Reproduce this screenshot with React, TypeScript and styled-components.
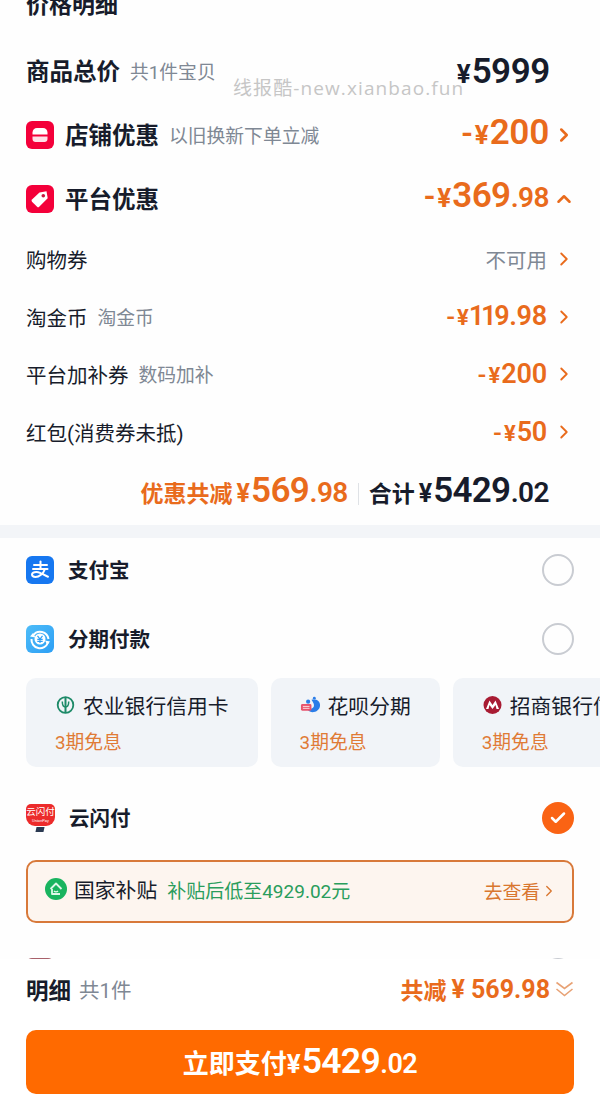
import styled, { createGlobalStyle } from "styled-components";
import { ChevronRight, ChevronUp, Check } from "lucide-react";

const ORANGE = "#e96b1c";
const INK = "#171c2b";
const GRAY = "#7f8894";
const SANS = `Roboto, "Noto Sans CJK SC", sans-serif`;

const GlobalStyle = createGlobalStyle`
  html, body {
    margin: 0;
    padding: 0;
    background: #fefefe;
  }
  * {
    box-sizing: border-box;
  }
`;

interface MoneyProps {
  prefix?: string;
  whole: string;
  cents?: string;
  big: number;
  small?: number;
  unit?: number;
  lift?: number;
}

function Money({ prefix, whole, cents, big, small, unit, lift }: MoneyProps) {
  return (
    <MoneyText $lift={lift || 0}>
      {prefix && <Minus $size={big * 0.9}>{prefix}</Minus>}
      <Sign $size={unit || 22}>¥</Sign>
      <Whole $size={big}>{whole}</Whole>
      {cents && <Cents $size={small || 28}>{cents}</Cents>}
    </MoneyText>
  );
}

function ShopIcon() {
  return (
    <BadgeSvg viewBox="0 0 28 28">
      <rect width="28" height="28" rx="6" fill="#f4003a" />
      <path d="M6.500 13.500v-2C6.500 9 8.500 7 11 7h6c2.500 0 4.500 2 4.500 4.500v2z" fill="#fff" />
      <path d="M6.500 15.500h15v2.500c0 1.700-1.300 3-3 3h-9c-1.700 0-3-1.300-3-3z" fill="#fff" opacity=".88" />
    </BadgeSvg>
  );
}

function TagIcon() {
  return (
    <BadgeSvg viewBox="0 0 28 28">
      <rect width="28" height="28" rx="6" fill="#f4003a" />
      <path d="M13.500 7.500l7-1.200 1.200 7-8.500 8.500a1.500 1.500 0 0 1-2.100 0l-5.100-5.100a1.500 1.500 0 0 1 0-2.100z" fill="#fff" />
      <circle cx="17.300" cy="10.700" r="1.800" fill="#c9153f" />
    </BadgeSvg>
  );
}

function AlipayIcon() {
  return (
    <BadgeSvg viewBox="0 0 28 28">
      <rect width="28" height="28" rx="6" fill="#1677f0" />
      <g fill="none" stroke="#fff" strokeWidth="2" strokeLinecap="round">
        <path d="M8 9h13" />
        <path d="M14.500 5.500V13" />
        <path d="M7 13h14.500" />
        <path d="M19 13c-1.500 4.500-6 8-9.500 8-2.200 0-3.500-1-3.500-2.400 0-2.200 4-3.600 8-1.800 2.500 1.100 5 2.700 8 3.900" />
      </g>
    </BadgeSvg>
  );
}

function InstallmentIcon() {
  return (
    <BadgeSvg viewBox="0 0 28 28">
      <defs>
        <linearGradient id="inst" x1="0" y1="0" x2="1" y2="1">
          <stop offset="0" stopColor="#4dbcf8" />
          <stop offset="1" stopColor="#2d9ff5" />
        </linearGradient>
      </defs>
      <rect width="28" height="28" rx="6" fill="url(#inst)" />
      <g fill="none" stroke="#fff" strokeWidth="2">
        <path d="M7 10.500A8.500 8.500 0 0 1 22.500 14" />
        <path d="M22 17.500A8.500 8.500 0 0 1 5.500 14" />
      </g>
      <path d="M4 11.500l5.500 1-2.500-4.500zM24 16.500l-5 -1 2.300 4.500z" fill="#fff" />
      <circle cx="14" cy="14" r="5.500" fill="#fff" />
      <path d="M11.500 10.800l2.500 3.200 2.500-3.200M11.300 14.300h5.400M11.300 16.300h5.400M14 14v4" fill="none" stroke="#2d9ff5" strokeWidth="1.200" />
    </BadgeSvg>
  );
}

function AbcIcon() {
  return (
    <BankSvg viewBox="0 0 20 20">
      <circle cx="10" cy="10" r="7.800" fill="none" stroke="#1d8a68" strokeWidth="1.800" />
      <path d="M10 3v14" stroke="#1d8a68" strokeWidth="2" />
      <path d="M6.800 6.500c0 4 1.200 5.500 3.200 5.500s3.200-1.500 3.200-5.500" fill="none" stroke="#1d8a68" strokeWidth="1.500" />
    </BankSvg>
  );
}

function HuabeiIcon() {
  return (
    <BankSvg viewBox="0 0 22 20">
      <path d="M12 4.500c5-1 9 1 9 5.500 0 5-4 7.500-8 7.500-3 0-5-1.500-5.500-4 3 1 6 .5 7-2 .7-2-.5-4-2.500-7z" fill="#2a7de8" />
      <circle cx="8.500" cy="6.500" r="2.200" fill="#2a7de8" />
      <circle cx="15" cy="2.800" r="1.500" fill="#2a7de8" />
      <rect x="1" y="9" width="11" height="7" rx="1.500" fill="#e8546e" />
      <path d="M3 11.500h7M3 13.500h7" stroke="#fff" strokeWidth=".8" />
    </BankSvg>
  );
}

function CmbIcon() {
  return (
    <BankSvg viewBox="0 0 20 20">
      <circle cx="10" cy="10" r="9" fill="#a81b33" />
      <path d="M3.500 14L7 5.500l3 4.500 3-4.500 3.500 8.500h-2.500L13 10l-3 4-3-4-1 4z" fill="#fff" />
    </BankSvg>
  );
}

function SubsidyIcon() {
  return (
    <SubsidySvg viewBox="0 0 22 22">
      <circle cx="11" cy="11" r="11" fill="#19b45f" />
      <path d="M5.500 11L11 5.500l5.500 5.500M7 11v5h8" fill="none" stroke="#dff7e8" strokeWidth="1.800" strokeLinejoin="round" />
      <path d="M9 13c1 1 3 1 4 0" fill="none" stroke="#dff7e8" strokeWidth="1.500" />
    </SubsidySvg>
  );
}

function WideChevrons() {
  return (
    <ChevronsSvg viewBox="0 0 19 18">
      <path d="M1.500 2.500l8 6 8-6M1.500 9l8 6.500 8-6.500" fill="none" stroke="#e8a275" strokeWidth="1.600" />
    </ChevronsSvg>
  );
}

export default function App() {
  return (
    <Page>
      <GlobalStyle />
      <Scroller>
        <PageTitle>价格明细</PageTitle>

        <SummaryRow $height={64}>
          <Left>
            <SummaryLabel>商品总价</SummaryLabel>
            <Hint>共1件宝贝</Hint>
          </Left>
          <PriceInk>
            <Money whole="5999" big={35} unit={26} />
          </PriceInk>
        </SummaryRow>

        <SummaryRow $height={64}>
          <Left>
            <ShopIcon />
            <SummaryLabel>店铺优惠</SummaryLabel>
            <Hint>以旧换新下单立减</Hint>
          </Left>
          <PriceOrange>
            <Money prefix="-" whole="200" big={35} unit={26} lift={6} />
            <ChevronRight size={22} strokeWidth={2.8} />
          </PriceOrange>
        </SummaryRow>

        <SummaryRow $height={63}>
          <Left>
            <TagIcon />
            <SummaryLabel>平台优惠</SummaryLabel>
          </Left>
          <PriceOrange>
            <Money prefix="-" whole="369" cents=".98" big={35} unit={26} lift={6} />
            <ChevronUp size={22} strokeWidth={2.8} />
          </PriceOrange>
        </SummaryRow>

        <DetailRow>
          <DetailLabel>购物券</DetailLabel>
          <DetailPrice>
            <Unavailable>不可用</Unavailable>
            <ChevronRight size={22} strokeWidth={2} />
          </DetailPrice>
        </DetailRow>
        <DetailRow>
          <Left>
            <DetailLabel>淘金币</DetailLabel>
            <Hint>淘金币</Hint>
          </Left>
          <DetailPrice>
            <Money prefix="-" whole="119.98" big={27} unit={22} />
            <ChevronRight size={22} strokeWidth={2} />
          </DetailPrice>
        </DetailRow>
        <DetailRow>
          <Left>
            <DetailLabel>平台加补券</DetailLabel>
            <Hint>数码加补</Hint>
          </Left>
          <DetailPrice>
            <Money prefix="-" whole="200" big={27} unit={22} />
            <ChevronRight size={22} strokeWidth={2} />
          </DetailPrice>
        </DetailRow>
        <DetailRow>
          <DetailLabel>红包(消费券未抵)</DetailLabel>
          <DetailPrice>
            <Money prefix="-" whole="50" big={27} unit={22} />
            <ChevronRight size={22} strokeWidth={2} />
          </DetailPrice>
        </DetailRow>

        <TotalRow>
          <TotalPart $color={ORANGE}>
            优惠共减
            <Money whole="569" cents=".98" big={35} unit={25} />
          </TotalPart>
          <TotalDivider />
          <TotalPart $color={INK}>
            合计
            <Money whole="5429" cents=".02" big={35} unit={25} />
          </TotalPart>
        </TotalRow>

        <Band />

        <PayRow $height={64}>
          <Left>
            <AlipayIcon />
            <PayLabel>支付宝</PayLabel>
          </Left>
          <Radio />
        </PayRow>
        <PayRow $height={74}>
          <Left>
            <InstallmentIcon />
            <PayLabel>分期付款</PayLabel>
          </Left>
          <Radio />
        </PayRow>

        <Cards>
          <Card>
            <CardTitle>
              <AbcIcon />
              农业银行信用卡
            </CardTitle>
            <CardNote>3期免息</CardNote>
          </Card>
          <Card>
            <CardTitle>
              <HuabeiIcon />
              花呗分期
            </CardTitle>
            <CardNote>3期免息</CardNote>
          </Card>
          <Card>
            <CardTitle>
              <CmbIcon />
              招商银行信用卡
            </CardTitle>
            <CardNote>3期免息</CardNote>
          </Card>
        </Cards>

        <UnionRow>
          <Left>
            <UnionLogo>
              <UnionName>云闪付</UnionName>
              <UnionSub>UnionPay</UnionSub>
              <UnionTab />
            </UnionLogo>
            <PayLabel>云闪付</PayLabel>
          </Left>
          <CheckedRadio>
            <Check size={18} strokeWidth={3.4} color="#fff" />
          </CheckedRadio>
        </UnionRow>

        <Banner>
          <Left>
            <SubsidyIcon />
            <BannerTitle>国家补贴</BannerTitle>
            <BannerGreen>补贴后低至4929.02元</BannerGreen>
          </Left>
          <BannerLink>
            去查看
            <ChevronRight size={18} strokeWidth={1.8} />
          </BannerLink>
        </Banner>

        <NextRow>
          <NextIcon />
          <Radio />
        </NextRow>
      </Scroller>

      <Footer>
        <FooterTop>
          <Left>
            <FooterTitle>明细</FooterTitle>
            <FooterCount>共1件</FooterCount>
          </Left>
          <FooterSaved>
            共减
            <SavedAmount>¥ 569.98</SavedAmount>
            <WideChevrons />
          </FooterSaved>
        </FooterTop>
        <PayButton>
          立即支付
          <Money whole="5429" cents=".02" big={35.5} small={27} unit={26} />
        </PayButton>
      </Footer>

      <Watermark>线报酷-new.xianbao.fun</Watermark>
    </Page>
  );
}

const Page = styled.div`
  position: relative;
  width: 600px;
  height: 1102px;
  overflow: hidden;
  display: flex;
  flex-direction: column;
  font-family: ${SANS};
  color: ${INK};
  background: #fefefe;
`;

const Scroller = styled.div`
  height: 959px;
  flex: none;
  overflow: hidden;
`;

const PageTitle = styled.div`
  margin: -14px 0 13px;
  padding: 0 26px;
  height: 40px;
  line-height: 40px;
  font-size: 23px;
  font-weight: 700;
`;

const Row = styled.div`
  display: flex;
  align-items: center;
  justify-content: space-between;
  padding: 0 26px;
`;

const SummaryRow = styled(Row)<{ $height: number }>`
  height: ${p => p.$height}px;
`;

const Left = styled.div`
  display: flex;
  align-items: center;
`;

const SummaryLabel = styled.span`
  margin-bottom: 2px;
  font-size: 23.500px;
  font-weight: 700;
  white-space: nowrap;
`;

const Hint = styled.span`
  margin: 0 0 1px 10px;
  font-size: 18.800px;
  color: ${GRAY};
  white-space: nowrap;
`;

const BadgeSvg = styled.svg`
  width: 28px;
  height: 28px;
  flex: none;
  margin-right: 11px;
`;

const BankSvg = styled.svg`
  width: 21px;
  height: 20px;
  flex: none;
  margin-right: 7px;
`;

const SubsidySvg = styled.svg`
  width: 22px;
  height: 22px;
  flex: none;
  margin-right: 7px;
`;

const ChevronsSvg = styled.svg`
  width: 19px;
  height: 18px;
  flex: none;
`;

const MoneyText = styled.span<{ $lift: number }>`
  display: inline-flex;
  align-items: baseline;
  margin-bottom: ${p => p.$lift}px;
  font-weight: 600;
  white-space: nowrap;
`;

const Minus = styled.span<{ $size: number }>`
  margin-right: 2px;
  font-size: ${p => p.$size}px;
  line-height: 1;
  font-weight: 600;
`;

const Sign = styled.span<{ $size: number }>`
  margin-right: 1px;
  font-size: ${p => p.$size}px;
  line-height: 1;
  font-weight: 700;
`;

const Whole = styled.span<{ $size: number }>`
  font-size: ${p => p.$size}px;
  line-height: 1;
  letter-spacing: -0.02em;
  font-variant-numeric: proportional-nums;
`;

const Cents = styled.span<{ $size: number }>`
  font-size: ${p => p.$size}px;
  line-height: 1;
  letter-spacing: -0.02em;
`;

const PriceInk = styled.div`
  display: flex;
  align-items: center;
  color: ${INK};
  margin-right: 24px;
`;

const PriceOrange = styled.div`
  display: flex;
  align-items: center;
  gap: 4px;
  margin-right: -1px;
  color: ${ORANGE};
`;

const DetailPrice = styled(PriceOrange)`
  gap: 6px;
`;

const DetailRow = styled(Row)`
  height: 57.750px;
`;

const DetailLabel = styled.span`
  font-size: 20.500px;
  color: ${INK};
  white-space: nowrap;
`;

const Unavailable = styled.span`
  font-size: 20.500px;
  color: ${GRAY};
`;

const TotalRow = styled.div`
  display: flex;
  align-items: center;
  justify-content: flex-end;
  height: 60px;
  margin-bottom: 4px;
  padding-right: 51px;
`;

const TotalPart = styled.div<{ $color: string }>`
  display: flex;
  align-items: baseline;
  gap: 4px;
  font-size: 23px;
  font-weight: 700;
  color: ${p => p.$color};
`;

const TotalDivider = styled.span`
  width: 1px;
  height: 22px;
  margin: 6px 10px 0;
  background: #dfe2e6;
`;

const Band = styled.div`
  height: 13px;
  background: #f3f5f8;
`;

const PayRow = styled(Row)<{ $height: number }>`
  height: ${p => p.$height}px;
`;

const PayLabel = styled.span`
  margin: 0 0 3px 3px;
  font-size: 20.500px;
  font-weight: 700;
`;

const Radio = styled.span`
  width: 32px;
  height: 32px;
  flex: none;
  border: 2.500px solid #c9ccd2;
  border-radius: 50%;
`;

const CheckedRadio = styled.span`
  width: 32px;
  height: 32px;
  flex: none;
  display: flex;
  align-items: center;
  justify-content: center;
  border-radius: 50%;
  background: #fa6314;
`;

const Cards = styled.div`
  display: flex;
  gap: 13px;
  margin-top: 2px;
  padding-left: 26px;
  overflow: hidden;
`;

const Card = styled.div`
  flex: none;
  height: 89px;
  padding: 14px 29px 0;
  border-radius: 10px;
  background: #f1f4f8;
`;

const CardTitle = styled.div`
  display: flex;
  align-items: center;
  height: 26px;
  font-size: 20.800px;
  color: ${INK};
  white-space: nowrap;
`;

const CardNote = styled.div`
  margin-top: 11px;
  font-size: 18.800px;
  line-height: 28px;
  color: #e07b36;
`;

const UnionRow = styled(Row)`
  height: 84px;
  margin-top: 9px;
`;

const UnionLogo = styled.div`
  position: relative;
  width: 29px;
  height: 22px;
  margin: -6px 11px 0 0;
  border-radius: 5px 5px 9px 9px;
  background: #ec2b2b;
  color: #fff;
  text-align: center;
`;

const UnionName = styled.div`
  font-size: 9.500px;
  line-height: 12px;
  padding-top: 2px;
  white-space: nowrap;
`;

const UnionSub = styled.div`
  font-size: 4px;
  line-height: 5px;
`;

const UnionTab = styled.span`
  position: absolute;
  left: 10px;
  bottom: -6px;
  width: 8px;
  height: 5px;
  background: #2b3a52;
  transform: skewX(-12deg);
`;

const Banner = styled.div`
  display: flex;
  align-items: center;
  justify-content: space-between;
  height: 63px;
  margin: 0 26px;
  padding: 0 17px 5px;
  border: 2px solid #d8793a;
  border-radius: 10px;
  background: #fdf5ef;
`;

const BannerTitle = styled.span`
  font-size: 20.800px;
  color: ${INK};
`;

const BannerGreen = styled.span`
  margin-left: 10px;
  font-size: 19px;
  color: #2a9d5c;
`;

const BannerLink = styled.span`
  display: flex;
  align-items: center;
  margin: 3px -3px 0 0;
  font-size: 18.800px;
  color: #d9772f;
`;

const NextRow = styled(Row)`
  align-items: flex-start;
  margin-top: 35px;
`;

const NextIcon = styled.span`
  width: 28px;
  height: 28px;
  border-radius: 6px;
  background: #a8606a;
`;

const Footer = styled.div`
  flex: 1;
  padding: 0 26px;
  background: #fff;
`;

const FooterTop = styled.div`
  display: flex;
  align-items: center;
  justify-content: space-between;
  height: 62px;
  padding-bottom: 2px;
`;

const FooterTitle = styled.span`
  font-size: 22.500px;
  font-weight: 700;
`;

const FooterCount = styled.span`
  margin-left: 8px;
  font-size: 20.500px;
  color: ${GRAY};
`;

const FooterSaved = styled.div`
  display: flex;
  align-items: center;
  font-size: 23px;
  font-weight: 700;
  color: ${ORANGE};
`;

const SavedAmount = styled.span`
  margin: 0 5px 0 5px;
  font-size: 25px;
`;

const PayButton = styled.button`
  display: flex;
  align-items: baseline;
  justify-content: center;
  width: 100%;
  height: 64px;
  margin-top: 9px;
  padding: 13px 0 0;
  border: none;
  border-radius: 10px;
  background: #ff6a00;
  color: #fff;
  font-family: ${SANS};
  font-size: 26px;
  font-weight: 700;
`;

const Watermark = styled.div`
  position: absolute;
  left: 233px;
  top: 76px;
  font-family: "Open Sans", "Noto Sans CJK SC", sans-serif;
  font-size: 19px;
  line-height: 24px;
  letter-spacing: 1.100px;
  color: #c6c6c6;
  white-space: nowrap;
`;
